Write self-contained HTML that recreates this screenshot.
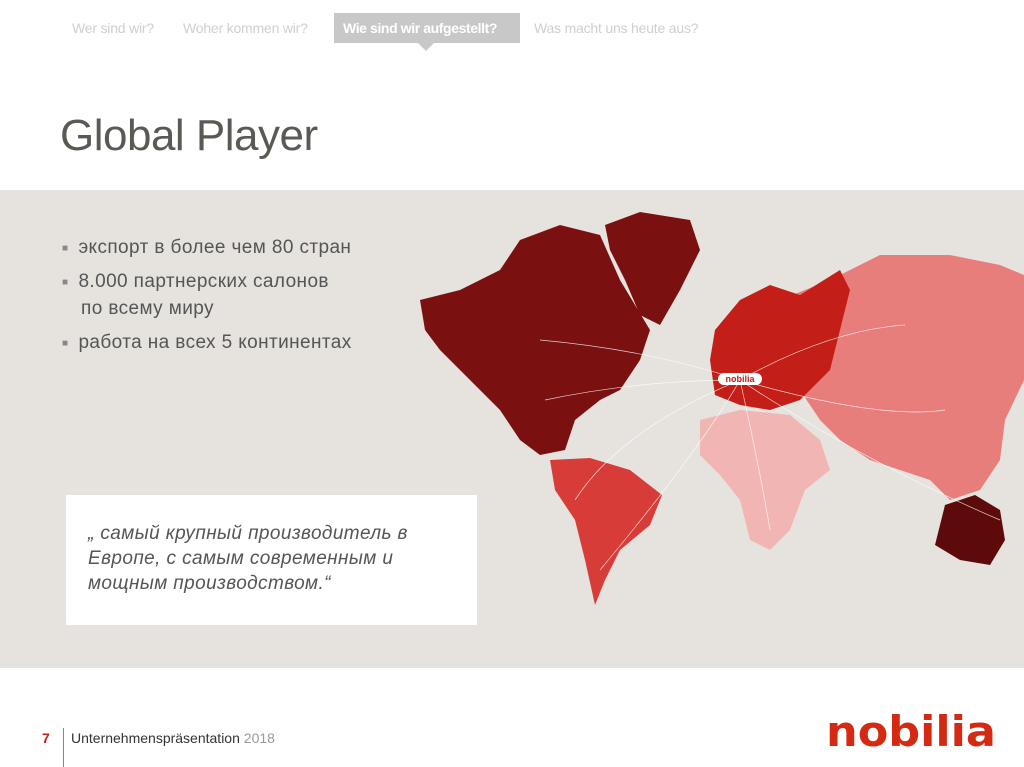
<!DOCTYPE html>
<html><head><meta charset="utf-8"><style>
body{margin:0;width:1024px;height:767px;background:#fff;position:relative;overflow:hidden;font-family:"Liberation Sans",sans-serif}
.nav{position:absolute;top:20px;font-size:14px;color:#cfcfcf;letter-spacing:-0.2px}
.band{position:absolute;left:0;top:190px;width:1024px;height:478px;background:#e6e3df}
h1{position:absolute;left:60px;top:111px;margin:0;font-weight:normal;font-size:44px;color:#5a5a55;letter-spacing:-0.5px}
.bl{position:absolute;left:62px;font-size:19px;color:#555;letter-spacing:0.4px}
.bl span{font-size:10px;color:#888;margin-right:10px;vertical-align:2px}
.q{position:absolute;left:66px;top:495px;width:411px;height:130px;background:#fff}
.q p{margin:26px 0 0 22px;font-style:italic;font-size:19px;line-height:25px;color:#555;letter-spacing:0.4px}
</style></head><body>
<div class="nav" style="left:72px">Wer sind wir?</div>
<div class="nav" style="left:183px">Woher kommen wir?</div>
<div style="position:absolute;left:334px;top:13px;width:186px;height:30px;background:#c8c8c8"></div>
<div style="position:absolute;left:418px;top:43px;border:8px solid transparent;border-top-color:#c8c8c8;border-bottom:0"></div>
<div class="nav" style="left:343px;color:#fff;font-weight:bold;letter-spacing:-0.4px">Wie sind wir aufgestellt?</div>
<div class="nav" style="left:534px">Was macht uns heute aus?</div>
<h1>Global Player</h1>
<div class="band"></div>
<svg style="position:absolute;left:0;top:0" width="1024" height="767">
<path fill="#e87e7c" d="M780 300 L830 280 L880 255 L950 255 L1000 265 L1024 275 L1024 380 L1005 420 L1000 460 L980 490 L950 500 L930 480 L900 470 L870 460 L840 440 L820 420 L800 390 L785 350Z"/>
<path fill="#c41e18" d="M715 330 L740 300 L770 285 L800 295 L840 270 L850 290 L840 330 L830 370 L800 400 L770 410 L740 405 L715 395 L710 360Z"/>
<path fill="#f1b5b3" d="M700 420 L740 410 L790 415 L820 440 L830 470 L805 490 L790 530 L770 550 L750 540 L740 500 L720 475 L700 455Z"/>
<path fill="#7a1010" d="M420 300 L460 290 L500 270 L520 240 L560 225 L600 235 L620 280 L650 330 L640 360 L620 390 L600 400 L575 420 L565 450 L540 455 L520 440 L500 410 L470 380 L440 350 L425 330Z"/>
<path fill="#7a1010" d="M605 225 L640 212 L690 220 L700 250 L680 290 L660 325 L640 315 L625 280 L610 250Z"/>
<path fill="#d83c38" d="M550 460 L590 458 L630 470 L662 495 L650 525 L620 550 L605 580 L595 605 L585 560 L575 520 L555 490Z"/>
<path fill="#5c0a0a" d="M945 505 L975 495 L1000 510 L1005 540 L990 565 L960 560 L935 545Z"/>
<g stroke="#fff" stroke-width="0.7" fill="none" opacity="0.8">
<path d="M740 380 Q650 350 540 340 M740 380 Q640 380 545 400 M740 380 Q620 430 575 500 M740 380 Q700 450 600 570 M740 380 Q830 330 905 325 M740 380 Q880 420 945 410 M740 380 Q860 460 1000 520 M740 380 Q760 470 770 530"/>
</g>
</svg>
<div style="position:absolute;left:718px;top:373px;width:44px;height:12px;background:#fff;border-radius:6px;font-size:9px;font-weight:bold;color:#c41e18;text-align:center;line-height:12px">nobilia</div>
<div class="bl" style="top:237px"><span>■</span>экспорт в более чем 80 стран</div>
<div class="bl" style="top:271px"><span>■</span>8.000 партнерских салонов</div>
<div class="bl" style="top:298px;left:81px">по всему миру</div>
<div class="bl" style="top:332px"><span>■</span>работа на всех 5 континентах</div>
<div class="q"><p>„ самый крупный производитель в<br>Европе, с самым современным и<br>мощным производством.“</p></div>
<div style="position:absolute;left:42px;top:730px;font-size:14px;font-weight:bold;color:#c41e18">7</div>
<div style="position:absolute;left:63px;top:728px;width:1px;height:39px;background:#888"></div>
<div style="position:absolute;left:71px;top:730px;font-size:14px;color:#333;letter-spacing:0px">Unternehmenspräsentation <span style="color:#999">2018</span></div>
<div style="position:absolute;left:826px;top:707px;font-size:42px;font-weight:900;color:#d42a14;letter-spacing:0px;font-family:'DejaVu Sans',sans-serif;transform:scaleX(1.06);transform-origin:left">nobilia</div>
</body></html>
